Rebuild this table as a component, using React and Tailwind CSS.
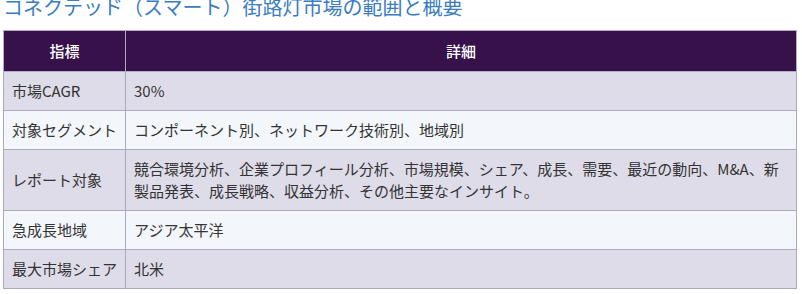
export default function App() {
  const rows = [
    ["市場CAGR", "30%"],
    ["対象セグメント", "コンポーネント別、ネットワーク技術別、地域別"],
    ["レポート対象", "競合環境分析、企業プロフィール分析、市場規模、シェア、成長、需要、最近の動向、M&A、新製品発表、成長戦略、収益分析、その他主要なインサイト。"],
    ["急成長地域", "アジア太平洋"],
    ["最大市場シェア", "北米"],
  ];
  return (
    <div
      className="w-[802px] h-[294px] overflow-hidden bg-white"
      style={{ fontFamily: '"Noto Sans CJK JP", "Noto Sans", sans-serif' }}
    >
      <div className="pl-[3px] pr-[5px]">
        <h2 className="text-[20px] leading-[28px] -mt-[7px] mb-[9px] text-[#3a7cc2] font-normal whitespace-nowrap">
          コネクテッド（スマート）街路灯市場の範囲と概要
        </h2>
        <table className="w-[794px] border-collapse text-[15px] leading-[22px] text-[#333]">
          <thead>
            <tr className="bg-[#37114a] text-white">
              <th className="w-[122px] h-[41px] border border-[#b3aac4] font-medium text-center">指標</th>
              <th className="h-[41px] border border-[#b3aac4] font-medium text-center">詳細</th>
            </tr>
          </thead>
          <tbody>
            {rows.map((r, i) => (
              <tr key={i} className={i % 2 === 0 ? "bg-[#dfdce9]" : "bg-[#f3f7fb]"}>
                <td className="border border-[#aca8bf] px-[8px] py-[8px] align-middle whitespace-nowrap">{r[0]}</td>
                <td className="border border-[#aca8bf] px-[8px] py-[8px] align-middle">{r[1]}</td>
              </tr>
            ))}
          </tbody>
        </table>
      </div>
    </div>
  );
}
